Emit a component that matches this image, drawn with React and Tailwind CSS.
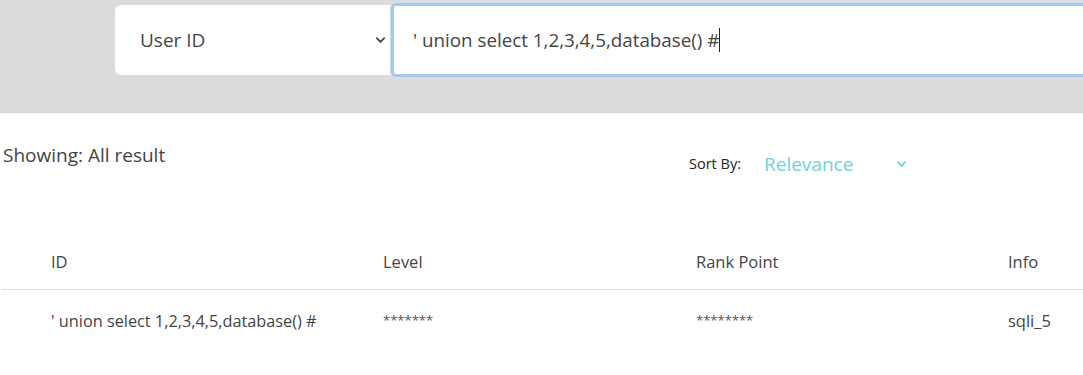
import React from "react";

const font = { fontFamily: "'Open Sans', 'Noto Sans', sans-serif" };

function Chevron({ className }) {
  return (
    <svg viewBox="0 0 12 8" className={className} fill="none" stroke="currentColor" strokeWidth="2" strokeLinecap="round" strokeLinejoin="round">
      <path d="M2 2l4 4 4-4" />
    </svg>
  );
}

export default function App() {
  return (
    <div className="w-[1083px] h-[375px] overflow-hidden bg-white text-[#333]" style={font}>
      <div className="h-[113px] bg-[#dcdcdc] border-b border-[#d0d0d0] flex pl-[115px] pt-[3px]">
        <div className="flex items-start">
          <div className="mt-[2px] w-[276px] h-[70px] bg-white rounded-l-[6px] flex items-center pl-[25px] pr-[5px] justify-between text-[19px] text-[#444]">
            <span>User ID</span>
            <Chevron className="w-[11px] h-[8px] text-[#444]" />
          </div>
          <div className="w-[720px] h-[74px] bg-white border-[3px] border-[#abc8ec] rounded-[5px] shadow-[0_0_0_1px_#c8dcf5] flex items-center pl-[19px] text-[18.8px] text-[#444]">
            <span>' union select 1,2,3,4,5,database() #</span>
            <span className="w-px h-[24px] bg-[#222]" />
          </div>
        </div>
      </div>
      <div className="flex items-start pt-[28px] pl-[3px]">
        <div className="w-[686px] text-[19px] text-[#444]">Showing: All result</div>
        <div className="flex items-center pt-[9px]">
          <span className="text-[14.5px] text-[#222]">Sort By:</span>
          <span className="ml-[23px] text-[19px] text-[#6fd0de]">Relevance</span>
          <Chevron className="ml-[43px] w-[11px] h-[8px] text-[#6fd0de]" />
        </div>
      </div>
      <div className="mt-[57px] ml-[2px]">
        <div className="grid grid-cols-[332px_313px_312px_1fr] pl-[49px] h-[54px] items-center text-[16.5px] text-[#444] border-b border-[#dedede]">
          <span>ID</span>
          <span>Level</span>
          <span>Rank Point</span>
          <span>Info</span>
        </div>
        <div className="grid grid-cols-[332px_313px_312px_1fr] pl-[49px] pt-[19px] text-[16.3px] text-[#444] items-start">
          <span>' union select 1,2,3,4,5,database() #</span>
          <span className="text-[13px] leading-[22px] text-[#555]">*******</span>
          <span className="text-[13px] leading-[22px] text-[#555]">********</span>
          <span className="text-[16.5px]">sqli_5</span>
        </div>
      </div>
    </div>
  );
}
